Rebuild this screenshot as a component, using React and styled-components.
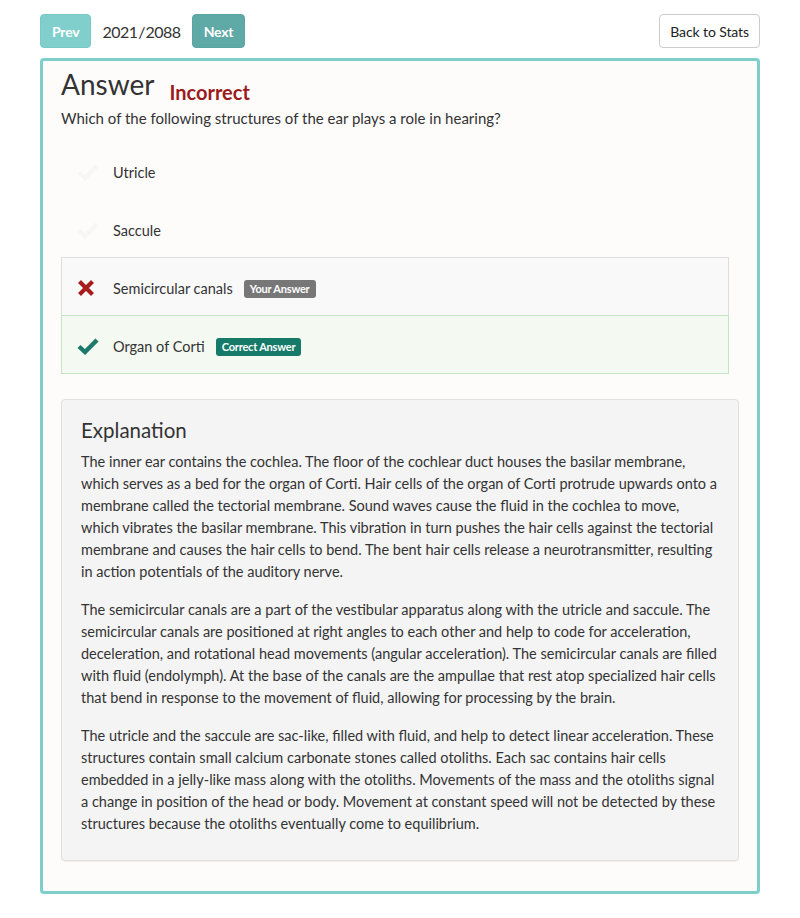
import styled, { createGlobalStyle } from "styled-components";

const GlobalStyle = createGlobalStyle`
  body {
    margin: 0;
    background: #ffffff;
    font-family: Lato, "Open Sans", sans-serif;
    color: #333333;
  }
`;

const options = [
  { text: "Utricle", state: "none" },
  { text: "Saccule", state: "none" },
  { text: "Semicircular canals", state: "wrong", badge: "Your Answer" },
  { text: "Organ of Corti", state: "right", badge: "Correct Answer" },
];

const paragraphs = [
  "The inner ear contains the cochlea. The floor of the cochlear duct houses the basilar membrane, which serves as a bed for the organ of Corti. Hair cells of the organ of Corti protrude upwards onto a membrane called the tectorial membrane. Sound waves cause the fluid in the cochlea to move, which vibrates the basilar membrane. This vibration in turn pushes the hair cells against the tectorial membrane and causes the hair cells to bend. The bent hair cells release a neurotransmitter, resulting in action potentials of the auditory nerve.",
  "The semicircular canals are a part of the vestibular apparatus along with the utricle and saccule. The semicircular canals are positioned at right angles to each other and help to code for acceleration, deceleration, and rotational head movements (angular acceleration). The semicircular canals are filled with fluid (endolymph). At the base of the canals are the ampullae that rest atop specialized hair cells that bend in response to the movement of fluid, allowing for processing by the brain.",
  "The utricle and the saccule are sac-like, filled with fluid, and help to detect linear acceleration. These structures contain small calcium carbonate stones called otoliths. Each sac contains hair cells embedded in a jelly-like mass along with the otoliths. Movements of the mass and the otoliths signal a change in position of the head or body. Movement at constant speed will not be detected by these structures because the otoliths eventually come to equilibrium.",
];

const CheckIcon = ({ color }) => (
  <svg width="22" height="18" viewBox="0 0 22 18">
    <path d="M2 9.5 L8 15 L20 3" fill="none" stroke={color} strokeWidth="4.4" />
  </svg>
);

const CrossIcon = ({ color }) => (
  <svg width="18" height="18" viewBox="0 0 18 18">
    <path d="M2.5 2.5 L15.5 15.5 M15.5 2.5 L2.5 15.5" fill="none" stroke={color} strokeWidth="4.2" />
  </svg>
);

export default function App() {
  return (
    <Page>
      <GlobalStyle />
      <Toolbar>
        <NavGroup>
          <NavButton $light>Prev</NavButton>
          <Counter>2021 / 2088</Counter>
          <NavButton>Next</NavButton>
        </NavGroup>
        <BackButton>Back to Stats</BackButton>
      </Toolbar>

      <Card>
        <Header>
          <Title>Answer</Title>
          <Verdict>Incorrect</Verdict>
        </Header>
        <Question>Which of the following structures of the ear plays a role in hearing?</Question>

        <OptionList>
          {options.map((o) => (
            <Option key={o.text} $state={o.state}>
              <IconSlot>
                {o.state === "wrong" ? (
                  <CrossIcon color="#a51d1d" />
                ) : (
                  <CheckIcon color={o.state === "right" ? "#1b7a6a" : "#f6f6f4"} />
                )}
              </IconSlot>
              <OptionText>{o.text}</OptionText>
              {o.badge && <Badge $state={o.state}>{o.badge}</Badge>}
            </Option>
          ))}
        </OptionList>

        <Explanation>
          <ExplanationTitle>Explanation</ExplanationTitle>
          {paragraphs.map((p, i) => (
            <Para key={i}>{p}</Para>
          ))}
        </Explanation>
      </Card>
    </Page>
  );
}

const Page = styled.div`
  padding: 14px 40px 24px;
  width: 720px;
`;

const Toolbar = styled.div`
  display: flex;
  justify-content: space-between;
  align-items: center;
  margin-bottom: 10px;
`;

const NavGroup = styled.div`
  display: flex;
  align-items: center;
  gap: 10px;
`;

const NavButton = styled.button`
  height: 34px;
  padding: 0 11px;
  border: 1px solid ${(p) => (p.$light ? "#78c9c6" : "#5aa4a1")};
  border-radius: 4px;
  background: ${(p) => (p.$light ? "#80cfcc" : "#5fa9a6")};
  color: #ffffff;
  font-family: Lato, sans-serif;
  font-weight: 700;
  font-size: 14px;
  letter-spacing: -0.2px;
`;

const Counter = styled.span`
  margin: 0 1px;
  font-size: 16px;
  color: #333333;
  word-spacing: -3px;
  letter-spacing: -0.5px;
`;

const BackButton = styled.button`
  height: 34px;
  padding: 0 10px;
  border: 1px solid #cccccc;
  border-radius: 4px;
  background: #ffffff;
  color: #222222;
  font-family: Lato, sans-serif;
  font-size: 14px;
  letter-spacing: -0.1px;
`;

const Card = styled.div`
  border: 3px solid #7ecfcb;
  border-radius: 4px;
  background: #fdfcfb;
  padding: 3px 18px 30px;
`;

const Header = styled.div`
  display: flex;
  align-items: flex-end;
  gap: 15px;
`;

const Title = styled.h2`
  margin: 0;
  font-size: 28px;
  font-weight: 400;
  line-height: 40px;
  color: #333333;
`;

const Verdict = styled.span`
  font-size: 20px;
  font-weight: 700;
  line-height: 24px;
  color: #9b1b1b;
`;

const Question = styled.p`
  margin: 3px 0 0;
  font-size: 15px;
  line-height: 22px;
`;

const OptionList = styled.div`
  display: flex;
  flex-direction: column;
  margin: 12px 10px 26px 0;
`;

const Option = styled.div`
  display: flex;
  align-items: center;
  padding: 19px 15px 15px;
  margin-bottom: -1px;
  border: 1px solid
    ${(p) =>
      p.$state === "right" ? "#c6e4bf" : p.$state === "wrong" ? "#dddddd" : "transparent"};
  background: ${(p) =>
    p.$state === "right" ? "#f4f9f2" : p.$state === "wrong" ? "#f9f9fa" : "transparent"};
  position: relative;
  z-index: ${(p) => (p.$state === "right" ? 1 : 0)};
`;

const IconSlot = styled.span`
  display: flex;
  width: 36px;
  align-items: center;
  margin-top: -2px;
`;

const OptionText = styled.span`
  font-size: 14.5px;
  line-height: 23px;
`;

const Badge = styled.span`
  margin-left: 11px;
  padding: 2px 6px 3px;
  border-radius: 3px;
  background: ${(p) => (p.$state === "right" ? "#167a69" : "#777777")};
  color: #ffffff;
  font-size: 11px;
  font-weight: 700;
  line-height: 13px;
  letter-spacing: -0.2px;
`;

const Explanation = styled.div`
  background: #f4f4f4;
  border: 1px solid #e0e0e0;
  border-radius: 4px;
  box-shadow: 0 1px 1px rgba(0, 0, 0, 0.05);
  padding: 17px 19px 9px;
`;

const ExplanationTitle = styled.h3`
  margin: 0 0 8px;
  font-size: 20.5px;
  font-weight: 400;
  line-height: 26px;
  color: #333333;
`;

const Para = styled.p`
  margin: 0 0 16px;
  font-size: 14.5px;
  line-height: 22px;
  color: #333333;
`;
